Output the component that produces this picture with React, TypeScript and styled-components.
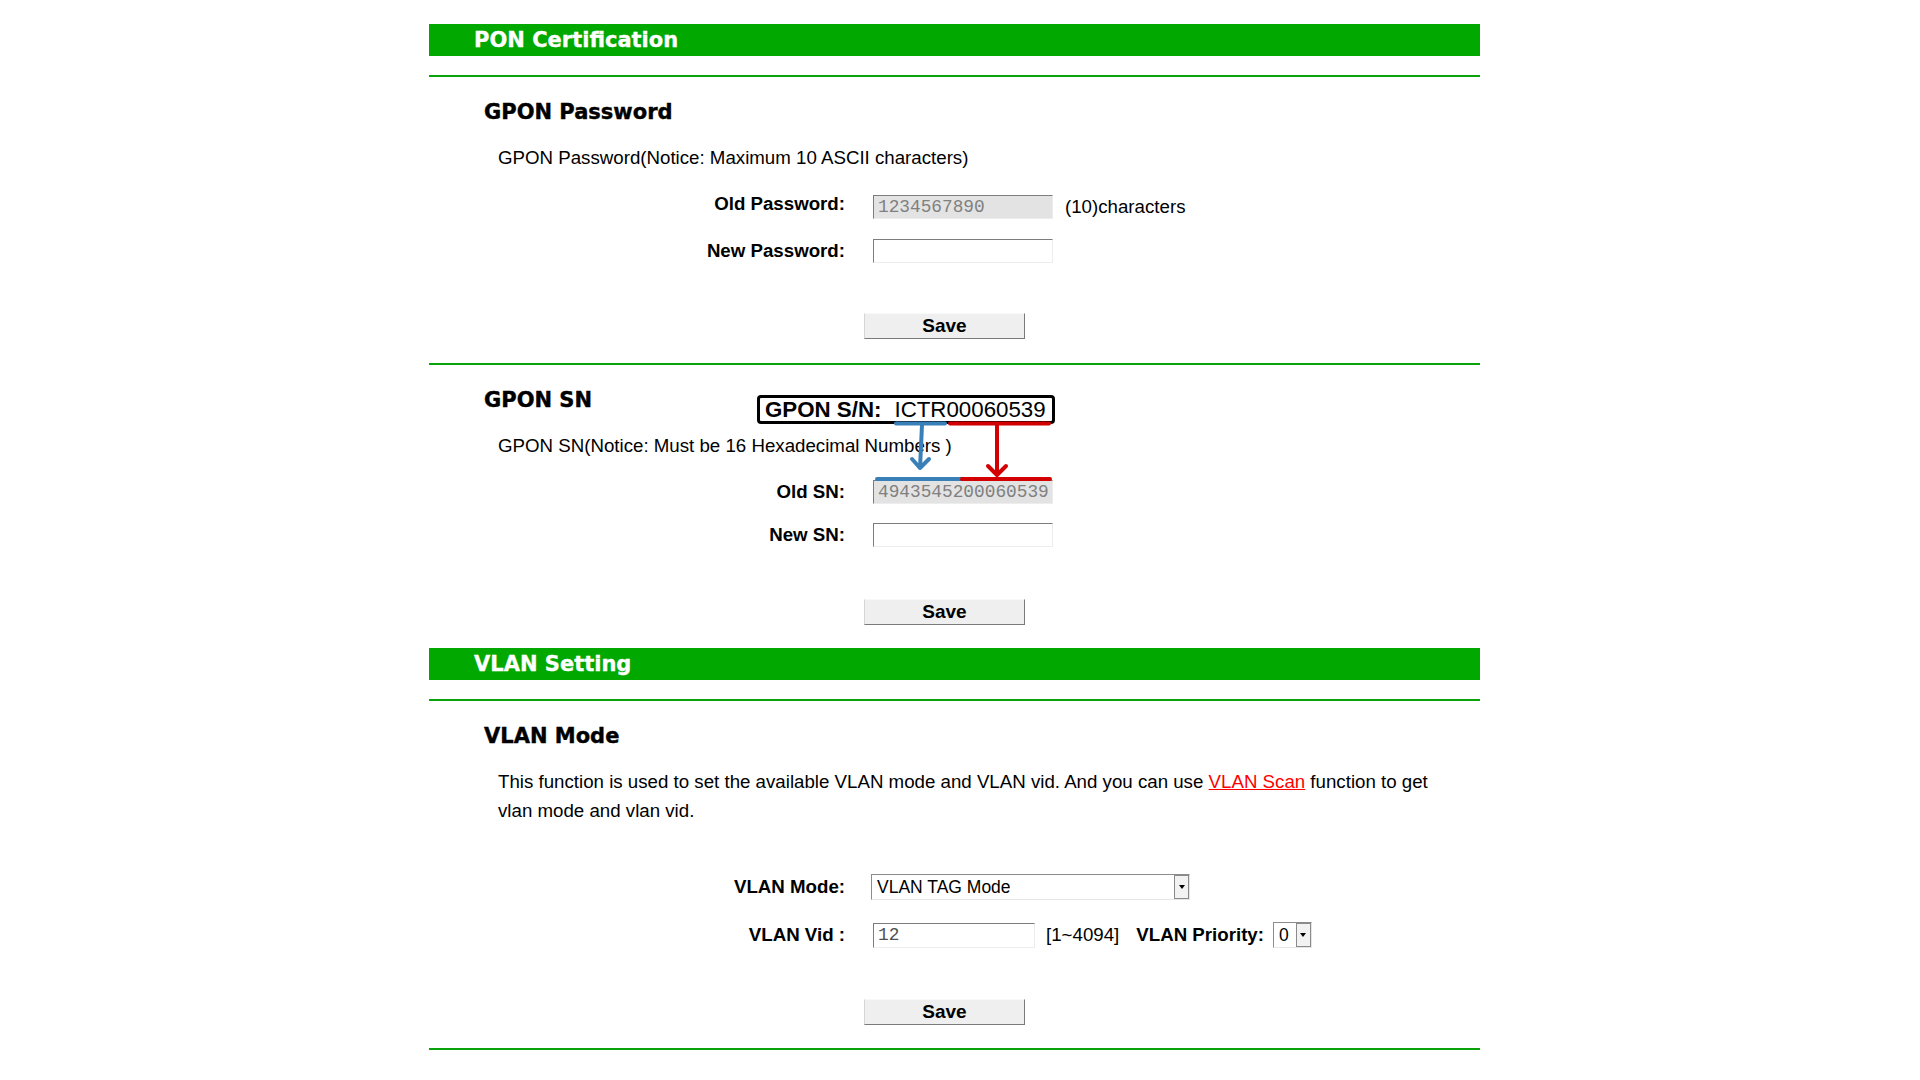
import React from "react";
import styled, { createGlobalStyle } from "styled-components";

const GlobalStyle = createGlobalStyle`
  html, body { margin: 0; padding: 0; background: #ffffff; }
  body { font-family: "Liberation Sans", Arial, sans-serif; color: #000; }
`;

const GREEN = "#00a800";
const RULE = "#0aa20a";

const Page = styled.div`
  width: 1051px;
  margin-left: 429px;
  padding-top: 24px;
  padding-bottom: 30px;
`;

const SectionBar = styled.div<{ $top?: number }>`
  height: 32px;
  margin-top: ${(p) => p.$top ?? 0}px;
  background: ${GREEN};
  display: flex;
  align-items: center;
  padding-left: 45px;
  font-family: "DejaVu Sans", Verdana, sans-serif;
  font-weight: bold;
  font-size: 21px;
  color: #ffffff;
  -webkit-text-stroke: 0.35px #ffffff;
`;

const Rule = styled.div<{ $top: number }>`
  height: 2px;
  background: ${RULE};
  margin-top: ${(p) => p.$top}px;
`;

const Block = styled.section`
  position: relative;
  display: flow-root;
`;

const Heading = styled.h2`
  margin: 23px 0 0;
  padding-left: 55px;
  font-family: "DejaVu Sans", Verdana, sans-serif;
  font-weight: bold;
  font-size: 21px;
  line-height: 24px;
  -webkit-text-stroke: 0.4px #000;
`;

const Notice = styled.p<{ $lh?: number; $top?: number }>`
  margin: ${(p) => p.$top ?? 22}px 0 0;
  padding-left: 69px;
  width: 950px;
  font-size: 18.7px;
  line-height: ${(p) => p.$lh ?? 24}px;
`;

const ScanLink = styled.a`
  color: #ff0000;
  text-decoration: underline;
`;

const FormGrid = styled.div<{ $top: number; $gap: number }>`
  display: grid;
  grid-template-columns: 416px 1fr;
  column-gap: 28px;
  row-gap: ${(p) => p.$gap}px;
  align-items: center;
  margin-top: ${(p) => p.$top}px;
`;

const Label = styled.div<{ $raise?: boolean }>`
  text-align: right;
  font-weight: bold;
  font-size: 18.7px;
  line-height: ${(p) => (p.$raise ? 17 : 22)}px;
  align-self: ${(p) => (p.$raise ? "start" : "center")};
`;

const FieldCell = styled.div`
  display: flex;
  align-items: center;
`;

const TextInput = styled.input<{ $w?: number; $h?: number; $locked?: boolean }>`
  box-sizing: border-box;
  width: ${(p) => p.$w ?? 180}px;
  height: ${(p) => p.$h ?? 24}px;
  margin: 0;
  padding: 0 4px;
  border: 1px solid;
  border-color: #7d7d7d #ededed #ededed #7d7d7d;
  background: ${(p) => (p.$locked ? "#e3e3e3" : "#ffffff")};
  font-family: "Liberation Mono", "Courier New", monospace;
  font-size: 17.8px;
  color: ${(p) => (p.$locked ? "#808080" : "#505050")};
  outline: none;
`;

const Hint = styled.span<{ $gap: number }>`
  margin-left: ${(p) => p.$gap}px;
  font-size: 18.7px;
`;

const InlineLabel = styled.span`
  margin-left: 17px;
  margin-right: 9px;
  font-weight: bold;
  font-size: 18.7px;
`;

const SelectBox = styled.div<{ $w: number }>`
  box-sizing: border-box;
  display: flex;
  align-items: stretch;
  width: ${(p) => p.$w}px;
  height: 26px;
  border: 1px solid;
  border-color: #8c8c8c #e6e6e6 #e6e6e6 #8c8c8c;
  background: #ffffff;
`;

const SelectValue = styled.div`
  flex: 1;
  display: flex;
  align-items: center;
  padding-left: 5px;
  font-size: 17.5px;
`;

const DropButton = styled.div`
  box-sizing: border-box;
  width: 15px;
  border: 1px solid #8a8a8a;
  background: #f2f2f2;
  display: flex;
  align-items: center;
  justify-content: center;
  &::after {
    content: "";
    border-left: 3.5px solid transparent;
    border-right: 3.5px solid transparent;
    border-top: 4px solid #000;
  }
`;

const ModeSelect = styled(SelectBox)`
  margin-left: -2px;
`;

const SaveRow = styled.div<{ $top: number }>`
  margin-top: ${(p) => p.$top}px;
  padding-left: 435px;
`;

const SaveButton = styled.button`
  box-sizing: border-box;
  width: 161px;
  height: 26px;
  padding: 0;
  background: #efefef;
  border: 1px solid;
  border-color: #f8f8f8 #7a7a7a #7a7a7a #d6d6d6;
  font-family: "Liberation Sans", Arial, sans-serif;
  font-weight: bold;
  font-size: 19px;
  color: #000;
`;

const Callout = styled.div`
  position: absolute;
  left: 328px;
  top: 30px;
  box-sizing: border-box;
  width: 298px;
  height: 29px;
  border: 3px solid #000;
  border-radius: 4px;
  background: #fff;
  display: flex;
  align-items: center;
  gap: 13px;
  padding-left: 5px;
  font-size: 22.3px;
  z-index: 2;
`;

const CalloutKey = styled.span`
  font-weight: bold;
`;

const ArrowLayer = styled.svg`
  position: absolute;
  left: 0;
  top: 0;
  overflow: visible;
  pointer-events: none;
  z-index: 3;
`;

const BLUE = "#3a80b8";
const RED = "#d20000";

const SnAnnotation: React.FC = () => (
  <>
    <Callout>
      <CalloutKey>GPON S/N:</CalloutKey>
      <span>ICTR00060539</span>
    </Callout>
    <ArrowLayer width={1051} height={140} viewBox="0 0 1051 140">
      <g fill="none" strokeWidth={4} strokeLinecap="round" strokeLinejoin="round">
        <path d="M467 58.5 H516" stroke={BLUE} />
        <path d="M493 60 L491 103 M483 94 L491 103 L500 94" stroke={BLUE} />
        <path d="M448 114 H533" stroke={BLUE} />
        <path d="M521 58.5 H620" stroke={RED} />
        <path d="M568 60 V110 M559 101 L568 110 L577 101" stroke={RED} />
        <path d="M533 114 H621" stroke={RED} />
      </g>
    </ArrowLayer>
  </>
);

export default function App() {
  return (
    <>
      <GlobalStyle />
      <Page>
        <SectionBar>PON Certification</SectionBar>
        <Rule $top={19} />

        <Block>
          <Heading>GPON Password</Heading>
          <Notice>GPON Password(Notice: Maximum 10 ASCII characters)</Notice>
          <FormGrid $top={25} $gap={20}>
            <Label $raise>Old Password:</Label>
            <FieldCell>
              <TextInput $locked readOnly value="1234567890" />
              <Hint $gap={12}>(10)characters</Hint>
            </FieldCell>
            <Label>New Password:</Label>
            <FieldCell>
              <TextInput type="password" defaultValue="" />
            </FieldCell>
          </FormGrid>
          <SaveRow $top={50}>
            <SaveButton>Save</SaveButton>
          </SaveRow>
        </Block>
        <Rule $top={24} />

        <Block>
          <Heading>GPON SN</Heading>
          <Notice>GPON SN(Notice: Must be 16 Hexadecimal Numbers )</Notice>
          <FormGrid $top={22} $gap={19}>
            <Label>Old SN:</Label>
            <FieldCell>
              <TextInput $locked readOnly value="4943545200060539" />
            </FieldCell>
            <Label>New SN:</Label>
            <FieldCell>
              <TextInput defaultValue="" />
            </FieldCell>
          </FormGrid>
          <SaveRow $top={52}>
            <SaveButton>Save</SaveButton>
          </SaveRow>
          <SnAnnotation />
        </Block>

        <SectionBar $top={23}>VLAN Setting</SectionBar>
        <Rule $top={19} />

        <Block>
          <Heading>VLAN Mode</Heading>
          <Notice $top={19} $lh={29}>
            This function is used to set the available VLAN mode and VLAN vid. And you can use{" "}
            <ScanLink href="#">VLAN Scan</ScanLink> function to get vlan mode and vlan vid.
          </Notice>
          <FormGrid $top={49} $gap={22}>
            <Label>VLAN Mode:</Label>
            <FieldCell>
              <ModeSelect $w={319}>
                <SelectValue>VLAN TAG Mode</SelectValue>
                <DropButton />
              </ModeSelect>
            </FieldCell>
            <Label>VLAN Vid :</Label>
            <FieldCell>
              <TextInput $w={162} $h={25} defaultValue="12" />
              <Hint $gap={11}>[1~4094]</Hint>
              <InlineLabel>VLAN Priority:</InlineLabel>
              <SelectBox $w={39}>
                <SelectValue>0</SelectValue>
                <DropButton />
              </SelectBox>
            </FieldCell>
          </FormGrid>
          <SaveRow $top={51}>
            <SaveButton>Save</SaveButton>
          </SaveRow>
        </Block>
        <Rule $top={23} />
      </Page>
    </>
  );
}
